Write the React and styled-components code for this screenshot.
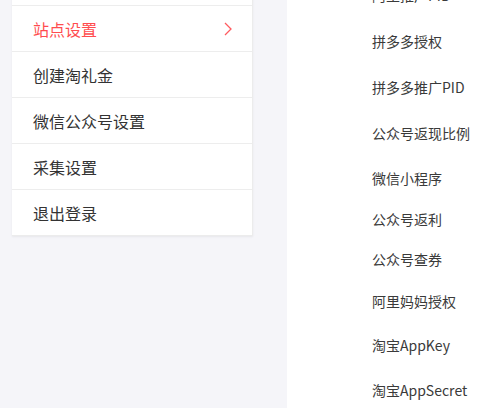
import styled, { createGlobalStyle } from "styled-components"

const Global = createGlobalStyle`
html, body {
  margin: 0;
  padding: 0;
  background: #ffffff;
  overflow: hidden;
}
body {
  font-family: "Noto Sans CJK SC", "Noto Sans", sans-serif;
}
`

const Pagina = styled.div`
display: flex;
width: 498px;
height: 408px;
overflow: hidden;
`

const Lateral = styled.aside`
width: 275px;
flex-shrink: 0;
background: #f5f5f9;
padding-left: 12px;
`

const Cartao = styled.ul`
list-style: none;
margin: -40px 0 0;
padding: 0;
width: 241px;
background: #ffffff;
box-shadow: 0 1px 2px rgba(0, 0, 0, 0.06);
border-right: 1px solid #ececec;
border-bottom: 1px solid #ececec;
box-sizing: border-box;
`

const Item = styled.li`
height: 45px;
display: flex;
align-items: center;
justify-content: space-between;
padding: 0 20px 0 21px;
font-size: 16px;
color: ${p => (p.$ativo ? "#ff4d4f" : "#333333")};
border-bottom: 1px solid #ededed;
&:last-child {
  border-bottom: none;
}
`

const Seta = styled.svg`
width: 8px;
height: 14px;
`

const Formulario = styled.section`
flex: 1;
background: #ffffff;
margin-top: -28px;
padding-left: 85px;
`

const Linha = styled.div`
height: ${p => p.$h}px;
display: flex;
align-items: center;
font-size: 14px;
color: #3a3a3a;
white-space: nowrap;
`

const menu = [
    { texto: "" },
    { texto: "站点设置", ativo: true },
    { texto: "创建淘礼金" },
    { texto: "微信公众号设置" },
    { texto: "采集设置" },
    { texto: "退出登录" },
]

const campos = [
    ["阿里推广PID", 46],
    ["拼多多授权", 46],
    ["拼多多推广PID", 46],
    ["公众号返现比例", 46],
    ["微信小程序", 43],
    ["公众号返利", 40],
    ["公众号查券", 40],
    ["阿里妈妈授权", 43],
    ["淘宝AppKey", 45],
    ["淘宝AppSecret", 46],
]

function App() {
    return (
        <>
            <Global />
            <Pagina>
                <Lateral>
                    <Cartao>
                        {menu.map((m, i) => (
                            <Item key={i} $ativo={m.ativo}>
                                {m.texto}
                                {m.ativo && (
                                    <Seta viewBox="0 0 8 14">
                                        <path d="M1 1 L7 7 L1 13" fill="none" stroke="#ff5b5f" strokeWidth="1.3" />
                                    </Seta>
                                )}
                            </Item>
                        ))}
                    </Cartao>
                </Lateral>
                <Formulario>
                    {campos.map(([t, h]) => (
                        <Linha key={t} $h={h}>{t}</Linha>
                    ))}
                </Formulario>
            </Pagina>
        </>
    )
}

export default App
